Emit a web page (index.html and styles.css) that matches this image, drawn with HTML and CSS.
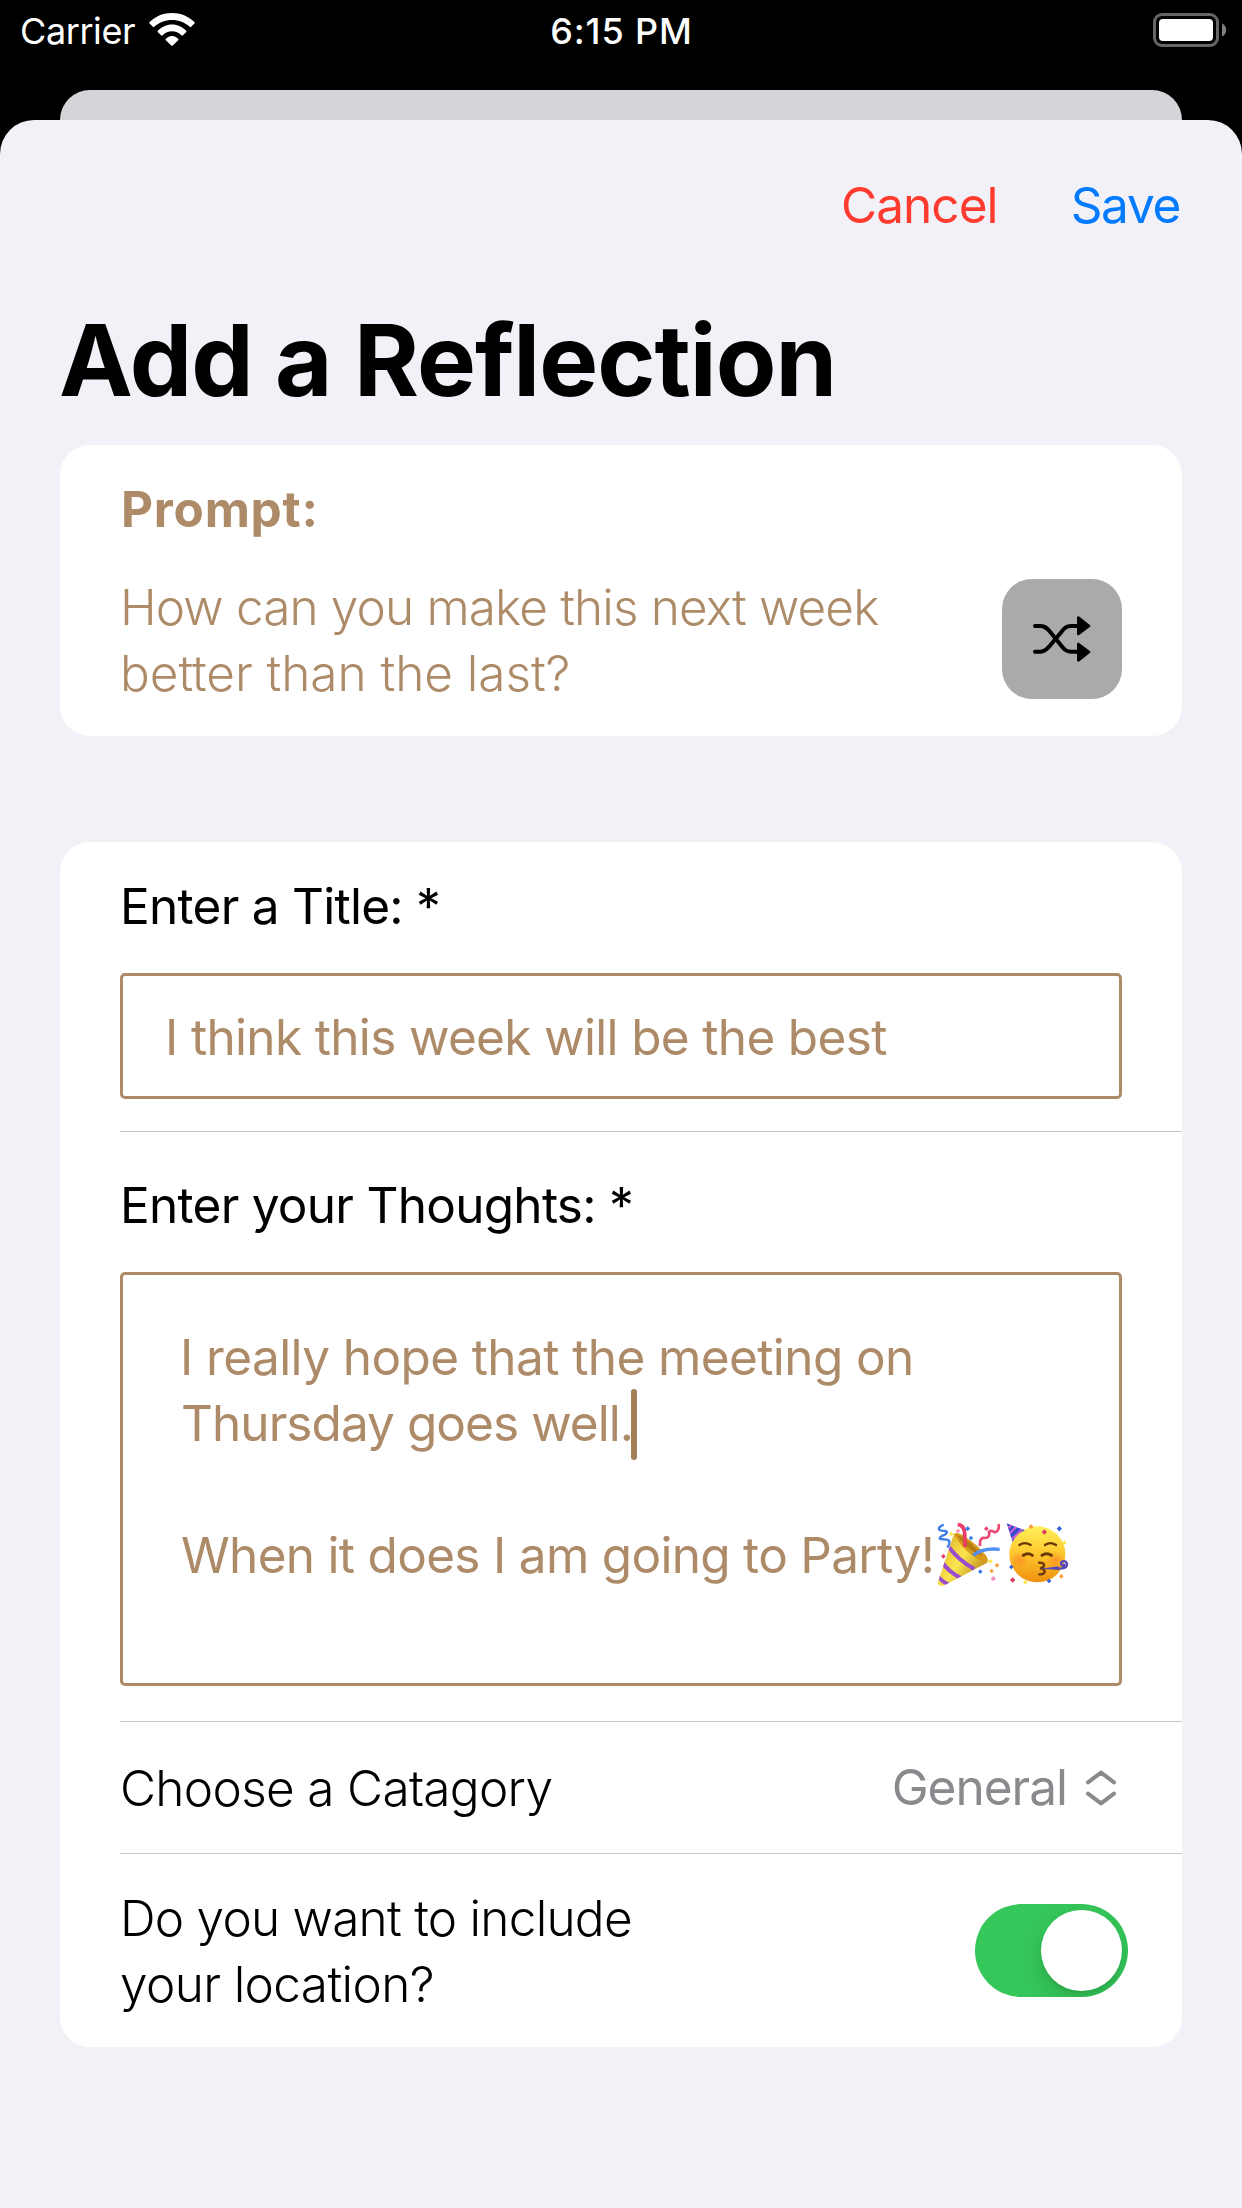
FILE: index.html
```html
<!DOCTYPE html>
<html lang="en">
<head>
<meta charset="utf-8">
<title>Add a Reflection</title>
<link rel="stylesheet" href="styles.css">
</head>
<body>
<div class="screen">
  <header class="status">
    <div class="status-left">
      <span class="carrier">Carrier</span>
      <svg class="wifi" width="46" height="33" viewBox="0 0 46 33">
        <path fill="#fff" d="M.6 10.6a1 1 0 0 1 0-1.5C6.500 3.300 14.300 0 23 0s16.500 3.300 22.400 9.100a1 1 0 0 1 0 1.500l-3.200 3.200a1 1 0 0 1-1.500 0C36 9.400 29.800 7 23 7S10 9.400 5.300 13.800a1 1 0 0 1-1.500 0z"/>
        <path fill="#fff" d="M8.900 19.200a1 1 0 0 1 0-1.500C12.600 14 17.500 11.500 23 11.500s10.400 2.500 14.100 6.200a1 1 0 0 1 0 1.500l-3.200 3.100a1 1 0 0 1-1.500 0C29.900 19.900 26.700 18.300 23 18.300s-6.900 1.600-9.400 4a1 1 0 0 1-1.500 0z"/>
        <path fill="#fff" d="M16.800 27.300a.9.900 0 0 1 0-1.400C18.500 24.200 20.600 23 23 23s4.500 1.200 6.200 2.900a.9.900 0 0 1 0 1.400l-5.500 5.300a1 1 0 0 1-1.400 0z"/>
      </svg>
    </div>
    <span class="clock">6:15 PM</span>
    <svg class="battery" width="73" height="34" viewBox="0 0 73 34">
      <rect x="1.500" y="1.500" width="63" height="31" rx="7.500" fill="none" stroke="#666" stroke-width="3"/>
      <rect x="6" y="6" width="54" height="22" rx="4" fill="#fff"/>
      <path d="M69 10.500c2.600 1 4.200 3.600 4.200 6.500s-1.600 5.500-4.200 6.500z" fill="#808080"/>
    </svg>
  </header>
  <div class="behind"></div>
  <main class="sheet">
    <nav class="actions">
      <a class="cancel">Cancel</a>
      <a class="save">Save</a>
    </nav>
    <h1 class="title">Add a Reflection</h1>

    <section class="card prompt">
      <h2 class="prompt-label">Prompt:</h2>
      <div class="prompt-row">
        <p class="question"><span class="q1">How can you make this next week</span><span class="q2">better than the last?</span></p>
        <button class="shuffle" aria-label="Shuffle">
          <svg width="60" height="48" viewBox="0 0 180 144">
            <g fill="none" stroke="#000" stroke-width="12" stroke-linecap="round" stroke-linejoin="round">
              <path d="M9 33H26C39 33 45 40 53 49L88 92C96 102 102 110 117 110H138"/>
              <path d="M9 110H26C39 110 45 102 53 93L88 51C96 41 102 33 117 33H138"/>
            </g>
            <path d="M139 8V57L171 33ZM139 87V136L171 111Z" stroke="#000" stroke-width="8" stroke-linejoin="round"/>
          </svg>
        </button>
      </div>
    </section>

    <section class="card form">
      <div class="row row-title">
        <label class="label">Enter a Title: *</label>
        <div class="field">I think this week will be the best</div>
      </div>
      <div class="row row-thoughts">
        <label class="label">Enter your Thoughts: *</label>
        <div class="area">
          <p class="line l1">I really hope that the meeting on</p>
          <p class="line l2">Thursday goes well.<i class="caret"></i></p>
          <p class="line"></p>
          <p class="line l4"><span>When it does I am going to Party!</span>
            <svg class="emoji popper" role="img" aria-label="party popper" width="63" height="64" viewBox="22 38 189 192">
              <defs>
                <linearGradient id="cone" x1="0" y1="0" x2="1" y2=".7"><stop offset="0" stop-color="#c48a1c"/><stop offset=".35" stop-color="#f0cf3c"/><stop offset=".55" stop-color="#f9e650"/><stop offset="1" stop-color="#b98312"/></linearGradient>
                <clipPath id="coneclip"><path d="M73 70C85 100 130 146 171 158L46 224Q28 232 24 218Z"/></clipPath>
              </defs>
              <path d="M73 70Q84 64 108 80Q144 104 168 134Q180 152 171 158C135 156 80 110 73 70Z" fill="#d99b1c"/>
              <path d="M80 73Q120 85 160 139Q120 125 80 73Z" fill="#b67a10"/>
              <path d="M73 70C85 100 130 146 171 158L46 224Q28 232 24 218Z" fill="url(#cone)"/>
              <g clip-path="url(#coneclip)" fill="none" stroke="#9a4bd0" stroke-width="12">
                <path d="M56 108Q84 148 134 176"/><path d="M38 156Q56 184 92 202"/><path d="M22 194Q34 212 56 222"/>
              </g>
              <path d="M84 42Q104 44 105 70T106 110" fill="none" stroke="#ea3d67" stroke-width="11"/>
              <path d="M131 135Q158 112 210 117" fill="none" stroke="#4f8ff0" stroke-width="10"/>
              <path d="M42 43Q22 52 30 59Q36 62 46 62Q58 64 46 73Q24 82 32 86L50 88Q67 90 53 112" fill="none" stroke="#3e7de6" stroke-width="7"/>
              <path d="M207 41Q210 61 196 66Q181 58 178 65Q181 83 166 83Q149 79 151 107" fill="none" stroke="#ec4770" stroke-width="8"/>
              <g fill="#3f7fe8"><path d="M114 47l8 8-8 8-8-8zM124 76l7 7-7 7-7-7zM152 177l7 7-7 7-7-7z"/></g>
              <g fill="#e63f68"><path d="M170 48l7 7-7 7-7-7zM41 131l7 7-7 7-7-7z"/></g>
              <g fill="#f492c0"><path d="M85 55l7 7-7 7-7-7zM191 197l8 8-8 8-8-8z"/></g>
              <g fill="#fa9e42"><path d="M202 158l7 7-7 7-7-7zM186 175l7 7-7 7-7-7z"/></g>
              <g fill="#fbe54a"><path d="M65 64l7 7-7 7-7-7zM182 146l7 7-7 7-7-7z"/></g>
            </svg>
            <svg class="emoji face" role="img" aria-label="partying face" width="63" height="64" viewBox="230 38 189 192">
              <defs>
                <linearGradient id="skin" x1="0" y1="0" x2="0" y2="1"><stop offset="0" stop-color="#fff05a"/><stop offset=".45" stop-color="#fecb30"/><stop offset="1" stop-color="#f0900f"/></linearGradient>
                <radialGradient id="blush"><stop offset="0" stop-color="#ff7a2a" stop-opacity=".55"/><stop offset="1" stop-color="#ff7a2a" stop-opacity="0"/></radialGradient>
                <clipPath id="hatclip"><path d="M232 39L287 60Q260 70 250 95Z"/></clipPath>
              </defs>
              <circle cx="324" cy="132" r="84" fill="url(#skin)"/>
              <circle cx="270" cy="150" r="28" fill="url(#blush)"/><circle cx="378" cy="150" r="28" fill="url(#blush)"/>
              <path d="M232 39L287 60Q260 70 250 95Z" fill="#3450cf"/>
              <g clip-path="url(#hatclip)" stroke="#d95bd4" stroke-width="6"><path d="M232 58L252 38M234 76L268 42M242 92L286 50"/></g>
              <g fill="none" stroke="#6a3a09" stroke-linecap="round" stroke-width="7">
                <path d="M270 104Q286 93 304 104M347 104Q363 93 380 104"/>
                <path stroke-width="9" d="M282 135Q296 125 309 135M338 135Q352 125 366 135"/>
                <path stroke-width="7" d="M329 157Q347 158 344 166Q342 173 332 174Q346 176 346 184Q344 193 330 192"/>
              </g>
              <path d="M333 175L388 168V179Z" fill="#5546b8"/>
              <path d="M384 175Q414 176 413 161Q410 150 400 153Q392 157 397 164Q404 170 405 160" fill="none" stroke="#5546b8" stroke-width="7"/>
              <path d="M345 57l8 8-8 8-8-8z" fill="#dd3b62"/><path d="M250 201l8 8-8 8-8-8z" fill="#dd3b62"/>
              <path d="M390 47l8 8-8 8-8-8zM246 163l7 7-7 7-7-7zM359 205l7 7-7 7-7-7z" fill="#3560d8"/>
              <path d="M305 42l8 7-8 7-8-7zM396 191l7 7-7 7-7-7z" fill="#fa9e42"/>
              <path d="M405 90l7 7-7 7-7-7zM288 209l7 7-7 7-7-7z" fill="#fbe54a"/>
            </svg>
          </p>
        </div>
      </div>
      <div class="row row-category">
        <span class="label category">Choose a Catagory</span>
        <span class="value">General</span>
        <svg class="chevrons" width="32" height="38" viewBox="0 0 32 38">
          <path d="M3 13.300L16 3.600L29 13.300M3 24.700L16 34.400L29 24.700" fill="none" stroke="#8a8a8e" stroke-width="4" stroke-linecap="round" stroke-linejoin="round"/>
        </svg>
      </div>
      <div class="row row-location">
        <p class="location"><span class="loc1">Do you want to include</span><span class="loc2">your location?</span></p>
        <div class="toggle"><div class="knob"></div></div>
      </div>
    </section>
  </main>
</div>
</body>
</html>
```
FILE: styles.css
```css
* { box-sizing: border-box; margin: 0; padding: 0; }
body { background: #000; }
.screen {
  width: 1242px; height: 2208px; overflow: hidden;
  display: flex; flex-direction: column;
  background: #000; color: #000;
  font-family: Inter, "Liberation Sans", sans-serif;
  font-size: 49.5px; line-height: 66px; font-weight: 400;
  white-space: nowrap;
}

/* Status bar */
.status {
  height: 90px; padding: 11px 16px 0 20px;
  display: grid; grid-template-columns: 1fr auto 1fr; align-items: start;
  color: #fff; font-size: 36px; line-height: 40px;
}
.status-left { display: flex; align-items: flex-start; }
.carrier { width: 129px; letter-spacing: -0.41px; }
.wifi { margin-top: 2px; }
.clock { font-weight: 550; letter-spacing: 0.9px; margin-right: 3px; }
.battery { justify-self: end; margin-top: 2px; overflow: visible; }

/* Sheets */
.behind { height: 30px; margin: 0 60px; background: #d5d4d9; border-radius: 30px 30px 0 0; }
.sheet {
  flex: 1; padding: 52px 60px 0;
  display: flex; flex-direction: column;
  background: #f2f1f7; border-radius: 34px 34px 0 0;
}
.actions { display: flex; justify-content: flex-end; gap: 73px; padding-right: 2px; }
.cancel { color: #ff3b30; letter-spacing: -0.93px; }
.save { color: #007aff; letter-spacing: -1.3px; }
.title {
  margin-top: 62px; margin-left: -1px; height: 120px;
  font-size: 99px; line-height: 120px; font-weight: 700; letter-spacing: -0.96px;
}
.card { background: #fff; border-radius: 30px; }

/* Prompt card */
.prompt { margin-top: 25px; padding: 31px 60px 30px; color: #ae8b68; }
.prompt-label { margin-left: 1px; font-size: 49.5px; font-weight: 700; letter-spacing: 0.75px; }
.prompt-row { margin-top: 32px; display: flex; justify-content: space-between; align-items: center; }
.question, .location { display: flex; flex-direction: column; font-weight: 300; }
.q1 { letter-spacing: -0.86px; }
.q2 { letter-spacing: -0.05px; }
.shuffle {
  width: 120px; height: 120px; margin-bottom: 2px; border: 0; border-radius: 30px; background: #aaa;
  display: flex; align-items: center; justify-content: center;
}

/* Form card */
.form { margin-top: 106px; }
.row { margin-left: 60px; padding-right: 60px; }
.row + .row { border-top: 1px solid #c6c6c8; }
.label { display: block; letter-spacing: -0.73px; }
.row-title { padding-top: 31px; padding-bottom: 32px; }
.row-thoughts { padding-top: 40px; padding-bottom: 35px; }
.field, .area { margin-top: 34px; border: 3px solid #ae8b68; border-radius: 5px; color: #ae8b68; }
.field { height: 126px; padding: 28px 42px; letter-spacing: -0.66px; }
.area { height: 414px; padding: 49px 0 0 58px; }
.line { height: 66px; display: flex; align-items: center; }
.l1 { letter-spacing: -0.6px; margin-left: -1px; }
.l2 { letter-spacing: -0.94px; }
.l4 { letter-spacing: -0.7px; }
.caret { width: 6px; height: 71px; margin: 2px 0 0 -2px; border-radius: 3px; background: #a27f57; }
.emoji { flex: none; }
.popper { margin-left: 3px; }
.face { margin-left: 6px; }

.row-category { height: 132px; padding-right: 65px; display: flex; align-items: center; }
.category { flex: 1; font-weight: 300; letter-spacing: -0.68px; }
.value { margin: -1px 18px 0 0; color: #8a8a8e; letter-spacing: -1px; }
.row-location {
  height: 194px; padding-top: 31px; padding-right: 54px;
  display: flex; justify-content: space-between; align-items: flex-start;
}
.loc1 { letter-spacing: -0.75px; }
.loc2 { letter-spacing: -0.62px; }
.toggle {
  width: 153px; height: 93px; margin-top: 19px; padding: 6px; border-radius: 46.5px;
  background: #35c759; overflow: hidden;
  display: flex; justify-content: flex-end;
}
.knob { width: 81px; height: 81px; border-radius: 50%; background: #fff; box-shadow: 0 9px 24px rgba(0, 0, 0, .15), 0 3px 3px rgba(0, 0, 0, .06); }
```
